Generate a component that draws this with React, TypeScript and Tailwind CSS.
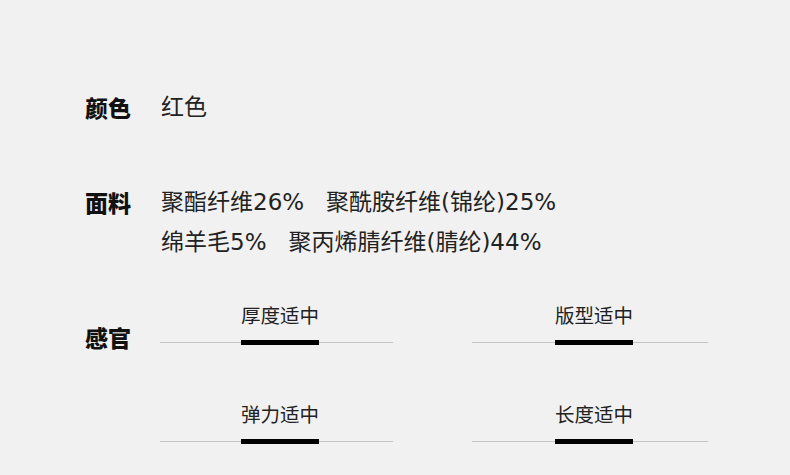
import React from "react";

const font = { fontFamily: '"Noto Sans CJK SC", "Noto Sans", sans-serif' };
const valueFont = { fontFamily: '"DejaVu Sans", "Noto Sans CJK SC", sans-serif' };

function Sense({ text, left }: { text: string; left: "l" | "r" }) {
  const seg = left === "l" ? "w-[81px]" : "w-[83px]";
  const width = left === "l" ? "w-[233px]" : "w-[236px]";
  return (
    <div className={width}>
      <div className="flex h-[30px] w-[250px] items-center">
        <div className={`${seg} shrink-0`} />
        <div className="w-[78px] text-center text-[19.5px] leading-[30px] text-[#222] whitespace-nowrap">{text}</div>
      </div>
      <div className="mt-[10px] flex h-[5px] items-center">
        <div className={`h-px ${seg} bg-[#c4c4c4]`} />
        <div className="h-[5px] w-[78px] bg-black" />
        <div className="h-px flex-1 bg-[#c4c4c4]" />
      </div>
    </div>
  );
}

export default function App() {
  return (
    <div className="h-[475px] w-[790px] overflow-hidden bg-[#f1f1f1] pl-[85px] pt-[87px]" style={font}>
      <div className="flex">
        <div className="w-[76px] text-[23px] font-black leading-[40px] text-[#111]">颜色</div>
        <div className="text-[23px] leading-[40px] text-[#222]" style={valueFont}>红色</div>
      </div>
      <div className="mt-[55px] flex">
        <div className="w-[76px] text-[23px] font-black leading-[40px] text-[#111]">面料</div>
        <div className="text-[23px] leading-[40px] text-[#222] whitespace-pre" style={valueFont}>
          <div>聚酯纤维26%   聚酰胺纤维(锦纶)25%</div>
          <div>绵羊毛5%   聚丙烯腈纤维(腈纶)44%</div>
        </div>
      </div>
      <div className="mt-[38px] flex">
        <div className="mt-[17px] w-[75px] text-[23px] font-black leading-[40px] text-[#111]">感官</div>
        <div className="grid grid-cols-[312px_312px] gap-y-[54px]">
          <Sense text="厚度适中" left="l" />
          <Sense text="版型适中" left="r" />
          <Sense text="弹力适中" left="l" />
          <Sense text="长度适中" left="r" />
        </div>
      </div>
    </div>
  );
}
